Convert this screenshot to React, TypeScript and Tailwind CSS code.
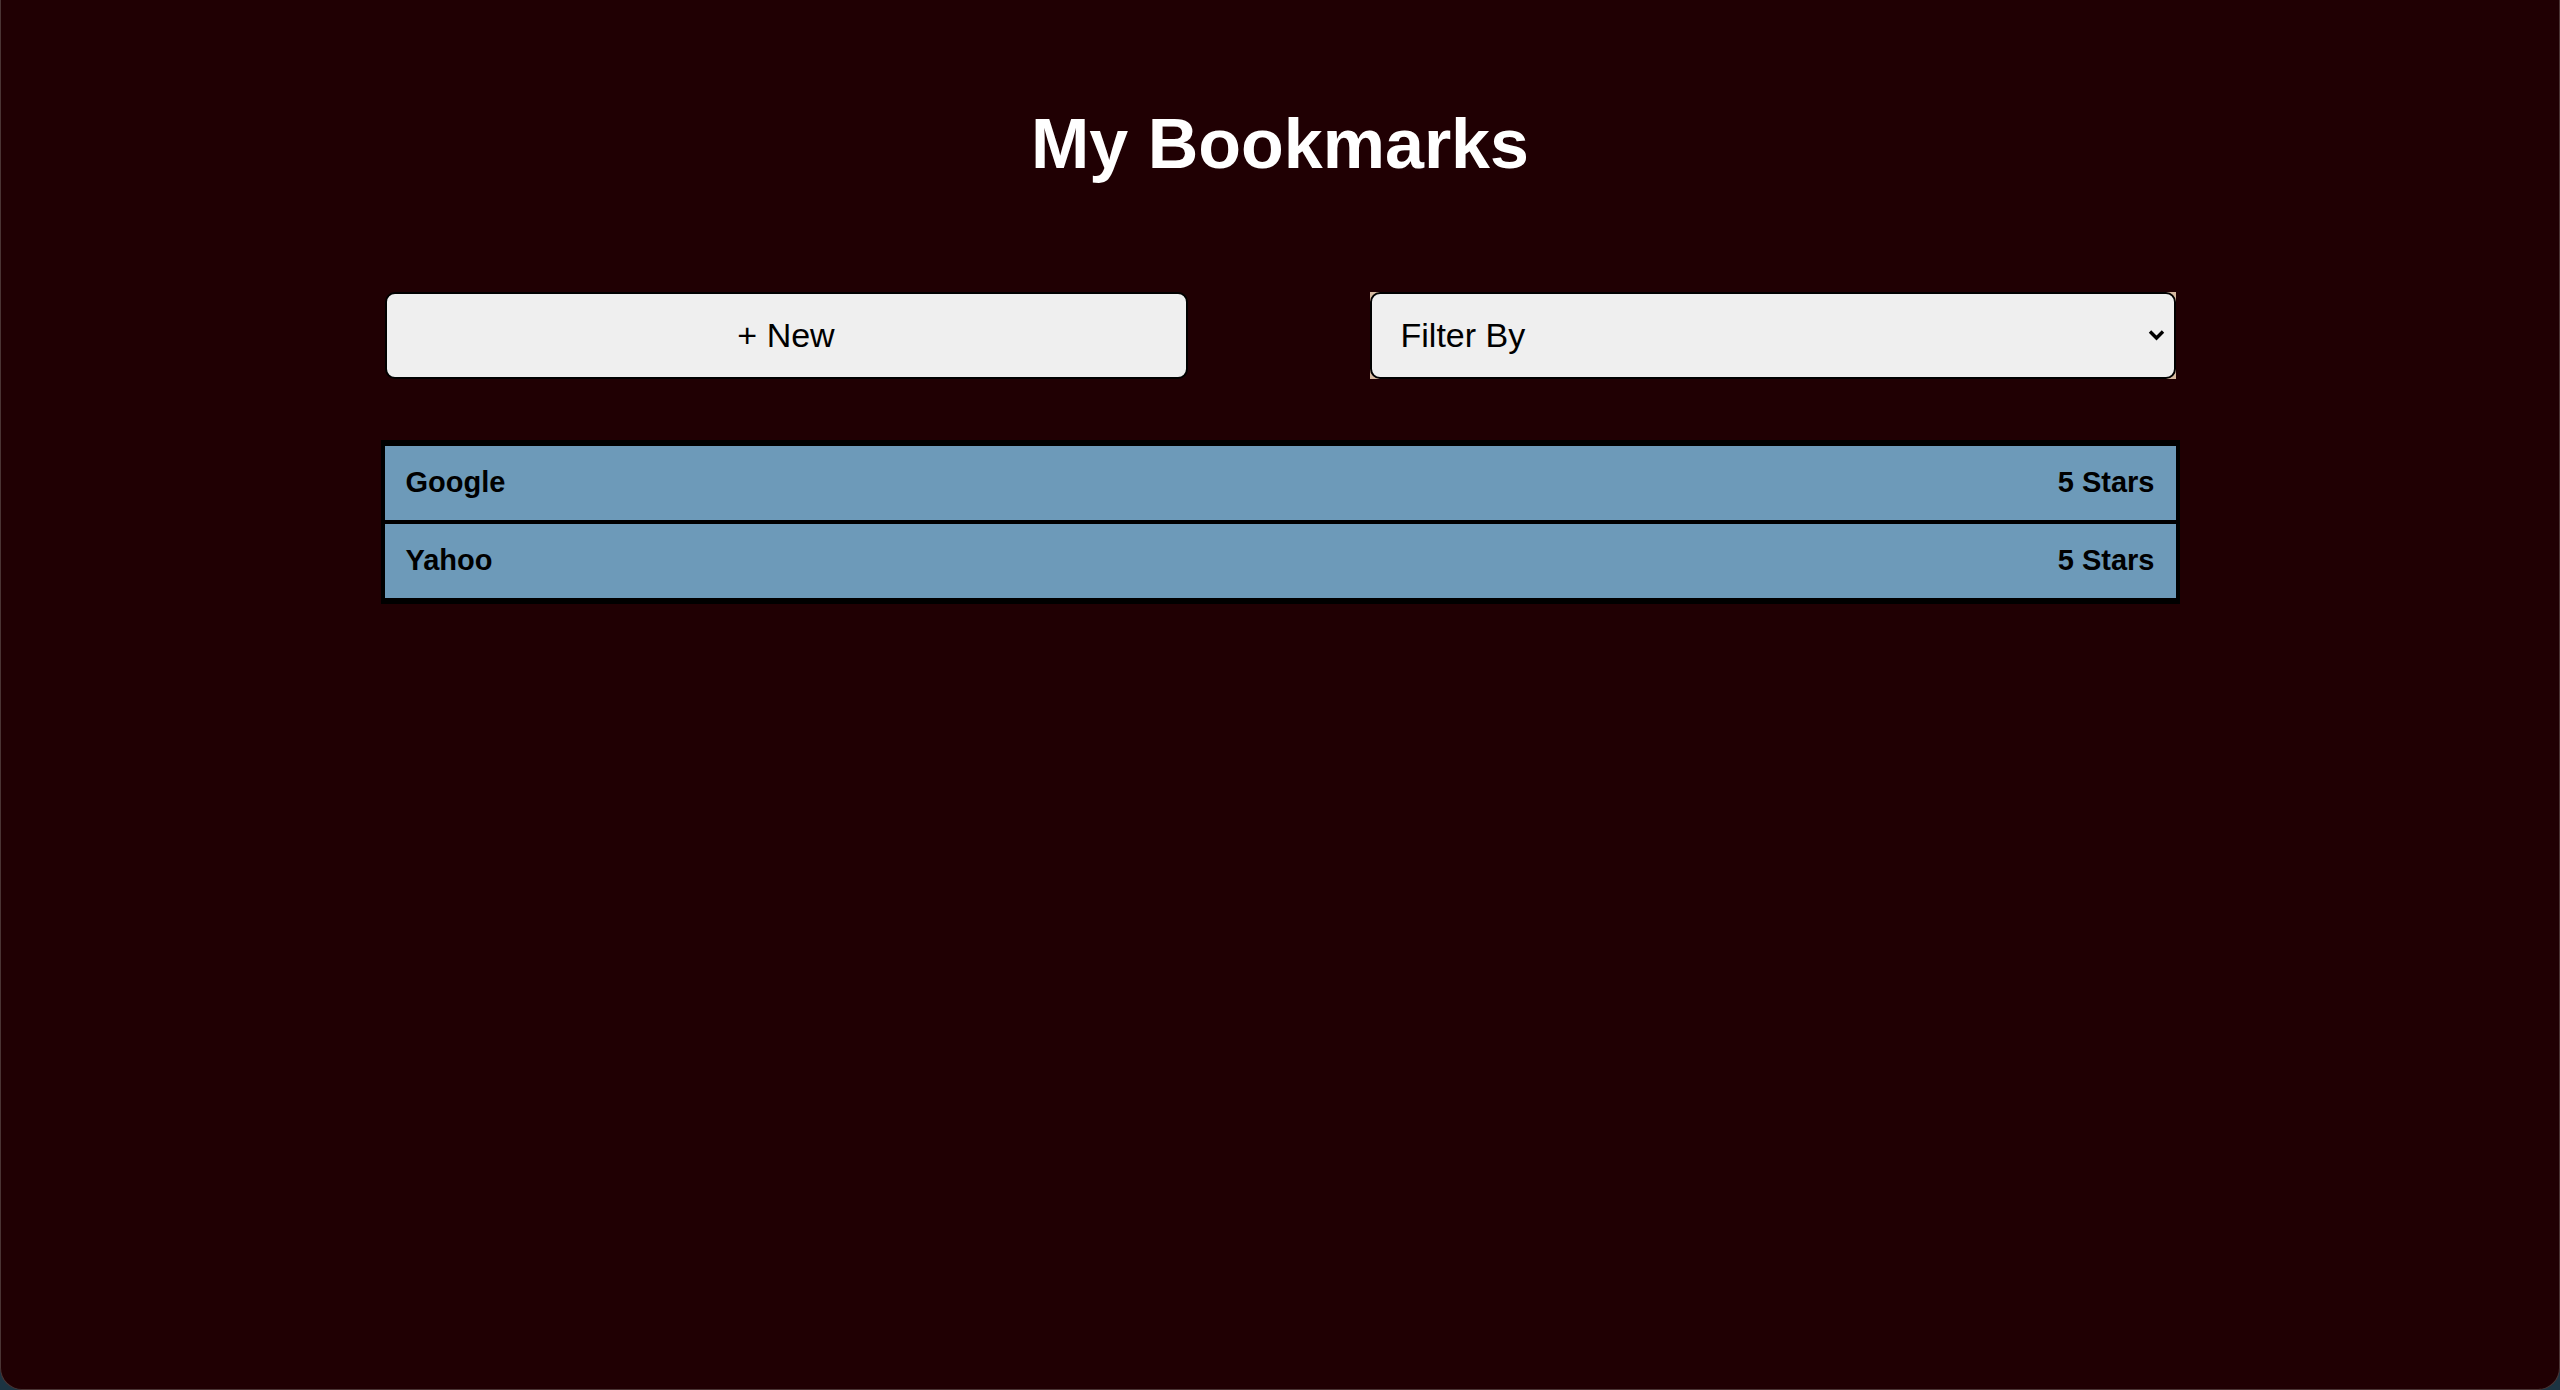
import React from "react";

const bookmarks = [
  { name: "Google", rating: "5 Stars" },
  { name: "Yahoo", rating: "5 Stars" },
];

export default function App() {
  return (
    <div className="h-[1390px] w-full bg-[#1c3442] font-['Liberation_Sans',Arial,sans-serif]">
      <div className="flex h-full flex-col items-center rounded-b-[22px] border-x border-b border-[#4a3434] bg-[#200003]">
        <h1 className="pt-[104px] text-center text-[70px] font-bold leading-[80px] text-white">
          My Bookmarks
        </h1>

        <div className="mt-[108px] flex w-[1791px] items-center justify-between">
          <button className="h-[87px] w-[803px] rounded-[10px] border-2 border-black bg-[#efefef] text-[34px] text-black">
            + New
          </button>
          <div className="relative h-[87px] w-[806px] bg-[#d6b9a0]">
            <select className="h-full w-full appearance-none rounded-[10px] border-2 border-black bg-[#efefef] pl-[29px] text-[34px] text-black outline-none">
              <option>Filter By</option>
            </select>
            <svg
              className="pointer-events-none absolute right-[11px] top-[37px]"
              width="17"
              height="12"
              viewBox="0 0 17 12"
            >
              <path d="M2 2.5 L8.5 9 L15 2.5" fill="none" stroke="black" strokeWidth="3.4" />
            </svg>
          </div>
        </div>

        <div className="mt-[61px] w-[1799px] border-x-4 border-y-[6px] border-black">
          {bookmarks.map((b, i) => (
            <div
              key={b.name}
              className={`flex items-center justify-between bg-[#6d9ab9] px-[21px] text-[29px] font-bold text-black ${
                i > 0 ? "h-[78px] border-t-4 border-black" : "h-[74px]"
              }`}
            >
              <span>{b.name}</span>
              <span>{b.rating}</span>
            </div>
          ))}
        </div>
      </div>
    </div>
  );
}
